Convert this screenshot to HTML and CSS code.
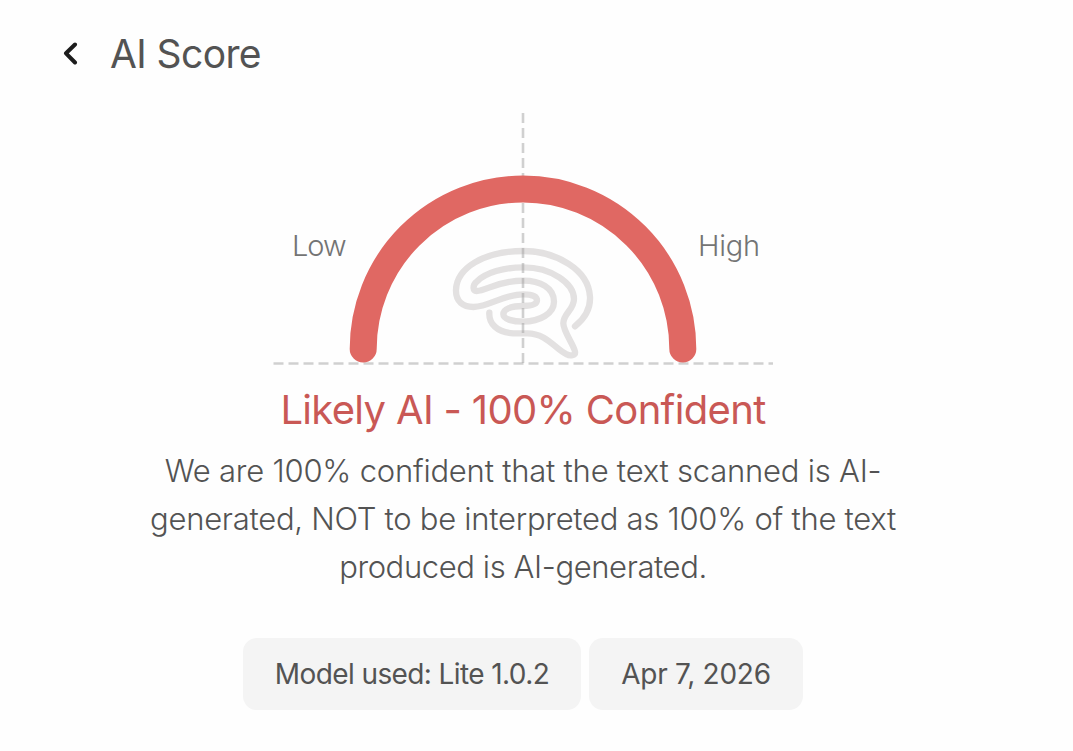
FILE: index.html
```html
<!DOCTYPE html>
<html lang="en">
<head>
    <meta charset="UTF-8">
    <title>AI Score</title>
    <link rel="stylesheet" href="styles.css">
</head>

<body>
<div class="header">
    <button class="back" aria-label="Back">
        <svg width="16" height="24" viewBox="0 0 16 24">
            <path d="M13 3.5 L4 12.3 L13 21.5"/>
        </svg>
    </button>
    <h1 class="title">AI Score</h1>
</div>

<div class="result">
    <svg class="gauge" width="500" height="254" viewBox="0 0 500 254">
        <!-- brain -->
        <path class="brain" transform="translate(167 123) scale(.3333)"
              d="M405 274C435 250 452 220 450 185C446 105 350 48 250 48C130 48 50 100 48 165C47 200 70 216 100 216C150 214 190 178 250 178C275 178 291 184 291 196C291 210 270 213 248 213C215 213 190 222 190 238C190 253 220 260 250 260C300 260 342 235 342 200C342 158 300 137 250 137C170 137 140 168 110 168C98 168 98 152 108 142C135 112 195 97 250 97C335 97 402 145 402 192C402 225 370 235 370 265C370 290 402 330 405 350C407 362 390 364 380 358C345 342 320 295 262 295L220 295C170 292 146 265 148 233"/>
        <path class="axis" d="M250 1V252"/>
        <path class="axis" d="M0.5 251.5H500"/>
        <path class="arc" d="M90.2 237A159.8 160 0 0 1 409.8 237"/>
        <text class="label low" x="19" y="144">Low</text>
        <text class="label high" x="425" y="144">High</text>
    </svg>

    <h2 class="verdict">Likely AI - 100% Confident</h2>
    <p class="text">
        <span class="line line1">We are 100% confident that the text scanned is AI-</span>
        <span class="line line2">generated, NOT to be interpreted as 100% of the text</span>
        <span class="line line3">produced is AI-generated.</span>
    </p>

    <div class="tags">
        <span class="tag model">Model used: Lite 1.0.2</span>
        <span class="tag date">Apr 7, 2026</span>
    </div>
</div>
</body>
</html>
```
FILE: styles.css
```css
* {
    margin: 0;
    padding: 0;
    box-sizing: border-box;
}

body {
    background-color: #fefefe;
    font-family: Inter, "Liberation Sans", sans-serif;
    color: #535353;
}

.header {
    display: flex;
    align-items: center;
    height: 104px;
    padding: 2px 0 0 62px;
}

.back {
    display: flex;
    width: 16px;
    margin-right: 32px;
    border: none;
    background: none;
}

.back path {
    fill: none;
    stroke: #1c1c1c;
    stroke-width: 4;
    stroke-linecap: round;
    stroke-linejoin: round;
}

.title {
    font-size: 39px;
    font-weight: 400;
    letter-spacing: -0.6px;
}

.result {
    display: flex;
    flex-direction: column;
    align-items: center;
    width: 1046px;
    padding-top: 8px;
}

.gauge {
    display: block;
}

.brain {
    fill: none;
    stroke: #e3e1e1;
    stroke-width: 19;
    stroke-linecap: round;
    stroke-linejoin: round;
}

.axis {
    fill: none;
    stroke: #999;
    stroke-opacity: .45;
    stroke-width: 2.6;
    stroke-dasharray: 10 5;
}

.arc {
    fill: none;
    stroke: #e06863;
    stroke-width: 27;
    stroke-linecap: round;
}

.label {
    font-size: 29px;
    font-weight: 300;
    fill: #747474;
}

.low {
    letter-spacing: -1px;
}

.high {
    letter-spacing: -0.2px;
}

.verdict {
    height: 56px;
    margin-top: 18px;
    font-size: 40px;
    line-height: 52px;
    font-weight: 400;
    letter-spacing: -0.67px;
    white-space: nowrap;
    color: #c95855;
}

.text {
    font-size: 31px;
    line-height: 48px;
    font-weight: 300;
    text-align: center;
    white-space: nowrap;
    margin-top: 7px;
}

.line {
    display: block;
}

.line1 {
    letter-spacing: -0.22px;
}

.line2 {
    letter-spacing: -0.27px;
}

.line3 {
    letter-spacing: -0.4px;
}

.tags {
    display: flex;
    gap: 8px;
    margin-top: 47px;
}

.tag {
    height: 72px;
    border-radius: 14px;
    background-color: #f4f4f4;
    font-size: 28px;
    line-height: 73px;
    text-align: center;
    white-space: nowrap;
}

.model {
    width: 338px;
    letter-spacing: -0.6px;
}

.date {
    width: 214px;
    letter-spacing: -0.25px;
}
```
